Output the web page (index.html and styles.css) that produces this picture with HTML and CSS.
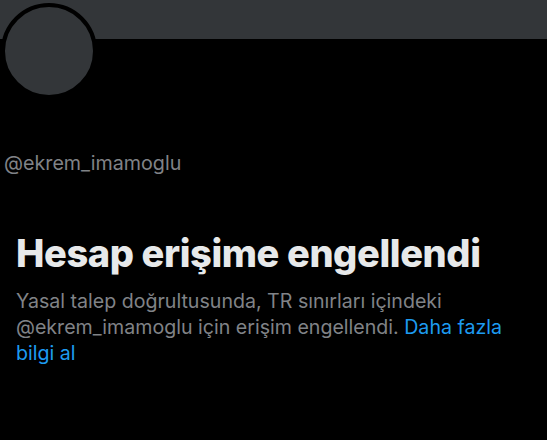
FILE: index.html
```html
<!DOCTYPE html>
<html lang="tr">
<head>
<meta charset="UTF-8">
<title>@ekrem_imamoglu</title>
<meta name="viewport" content="width=device-width,initial-scale=1">
<link rel="stylesheet" href="styles.css">
</head>
<body>

<!-- header banner + avatar -->
<div class="banner"></div>
<div class="avatar"></div>

<div class="handle">@ekrem_imamoglu</div>

<!-- withheld notice -->
<div class="notice">
  <h1>Hesap erişime engellendi</h1>
  <p>Yasal talep doğrultusunda, TR sınırları içindeki @ekrem_imamoglu için erişim engellendi. <a href="#">Daha fazla bilgi al</a></p>
</div>

</body>
</html>
```

FILE: styles.css
```css
:root{
  --bg:#000;
  --banner:#333639;
  --muted:#808387;
  --text:#e7e9ea;
  --link:#1d9bf0;
}
body{
  margin:0; background:var(--bg); color:var(--text);
  font-family:Inter, "Noto Sans", sans-serif;
  height:440px; overflow:hidden;
}
.banner{height:39px; background:var(--banner);}
.avatar{
  width:88px; height:88px; margin:-36px 0 0 1px;
  background:var(--banner); border:4px solid #000; border-radius:50%;
}
.handle{
  margin:52px 0 0 4px;
  font-size:19.7px; line-height:24px; color:var(--muted);
}
.notice{padding:0 16px; margin-top:56px; max-width:508px;}
.notice h1{
  margin:0; font-size:38px; font-weight:800; line-height:44px; letter-spacing:-0.4px;
  white-space:nowrap;
}
.notice p{
  margin:13px 0 0; font-size:19.6px; line-height:26px; color:var(--muted);
}
.notice a{color:var(--link); text-decoration:none;}
```
